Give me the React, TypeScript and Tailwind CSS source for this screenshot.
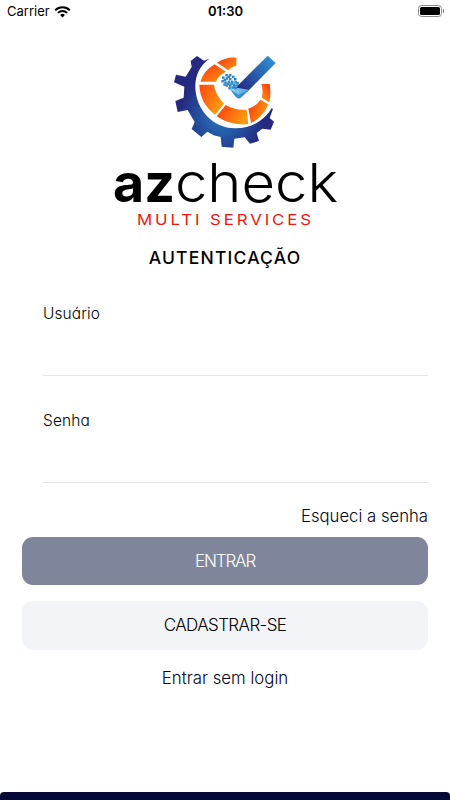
import { ReactNode } from 'react';

const pixels = [
  [181, 87], [192, 87], [201, 92], [171, 94], [182, 97], [192, 99], [207, 99], [169, 105], [178, 109],
  [188, 107], [198, 107], [208, 108], [182, 118], [192, 118], [203, 115], [211, 118], [190, 126], [199, 124],
  [208, 126], [187, 92], [176, 101], [196, 112], [204, 121], [214, 111], [175, 115], [186, 113],
];

const GearLogo = () => {
  return (
    <svg viewBox="0 0 360 330" className="h-[110px] w-[120px]">
      <defs>
        <radialGradient id="gear" gradientUnits="userSpaceOnUse" cx="170" cy="215" r="150">
          <stop offset="0.1" stopColor="#2472b8" />
          <stop offset="0.85" stopColor="#252a80" />
        </radialGradient>
        <linearGradient id="ringTop" x1="0" y1="0" x2="1" y2="1">
          <stop offset="0.1" stopColor="#fa3c10" />
          <stop offset="1" stopColor="#ff9a10" />
        </linearGradient>
        <linearGradient id="ringLeft" x1="0" y1="0" x2="1" y2="0.6">
          <stop offset="0" stopColor="#fa4510" />
          <stop offset="1" stopColor="#ff9d10" />
        </linearGradient>
        <linearGradient id="ringBottom" x1="0" y1="0" x2="1" y2="0.4">
          <stop offset="0" stopColor="#f93510" />
          <stop offset="1" stopColor="#ff9a10" />
        </linearGradient>
        <linearGradient id="ringRight" x1="1" y1="0" x2="0.3" y2="1">
          <stop offset="0" stopColor="#f93510" />
          <stop offset="1" stopColor="#ff9210" />
        </linearGradient>
        <linearGradient id="arm" gradientUnits="userSpaceOnUse" x1="322" y1="40" x2="232" y2="130">
          <stop offset="0" stopColor="#2e90d4" />
          <stop offset="1" stopColor="#252f8a" />
        </linearGradient>
        <linearGradient id="tip" x1="0" y1="0" x2="1" y2="0.4">
          <stop offset="0" stopColor="#a5dbf6" />
          <stop offset="1" stopColor="#4a9fd8" />
        </linearGradient>
      </defs>
      <path
        fill="url(#gear)"
        d="M77 48L96 33L117 47L133 41C103 63 90 93 91 128C94 195 143 248 210 250C256 251 298 228 320 189L324 192L314 219L327 230L317 254L292 251L275 264L282 288L255 296L239 277L208 281L205 308L170 305L167 276L146 271L127 260L109 276L80 252L89 231L68 195L38 201L31 168L56 158L58 125L27 112L33 89L62 95L80 66Z"
      />
      <path fill="url(#ringTop)" d="M156 53Q184 36 214 38V62Q201 64 190 76Z" />
      <path fill="url(#ringTop)" d="M149 58L183 80Q160 90 153 110H106Q116 77 149 58Z" />
      <path fill="url(#ringLeft)" d="M103 119H147Q149 145 177 176L151 209Q105 176 103 119Z" />
      <path fill="url(#ringBottom)" d="M182 180Q210 197 245 194L250 237Q199 244 155 214Z" />
      <path fill="url(#ringBottom)" d="M250 191Q276 183 286 164L310 178Q293 219 258 234Z" />
      <path fill="url(#ringRight)" d="M289 117H314Q319 149 313 172L290 158Q296 138 289 117Z" />
      <path fill="url(#arm)" d="M308 32L332 54L247 140L214 134V126Z" />
      <path fill="url(#tip)" d="M195 133L214 128L252 134L229 157Q221 164 213 156Z" />
      <path fill="#2f8fd6" d="M195 133L221 150L252 134L229 157Q221 164 213 156Z" />
      <g fill="#2b86c6">
        {pixels.map(([x, y]) => (
          <rect key={`${x}-${y}`} x={x} y={y} width="7.5" height="7.5" />
        ))}
      </g>
    </svg>
  );
};

const Wordmark = () => {
  return (
    <svg viewBox="0 0 230 75" className="h-[75px] w-[230px] overflow-visible font-['Inter',sans-serif]">
      <text y="47" fontSize="54">
        <tspan x="3" fontWeight="700" textLength="62" lengthAdjust="spacingAndGlyphs">az</tspan>
        <tspan x="65" fontWeight="300" textLength="163" lengthAdjust="spacingAndGlyphs">check</tspan>
      </text>
      <text x="27" y="70" fontSize="14.5" fill="#f5150f" letterSpacing="2.5" textLength="177" lengthAdjust="spacingAndGlyphs">
        MULTI SERVICES
      </text>
    </svg>
  );
};

const WifiIcon = () => {
  return (
    <svg viewBox="0 0 17 12" className="h-3 w-[17px]">
      <path d="M8.5 11.5L6.100 9A3.500 3.500 0 0 1 10.900 9Z" />
      <path d="M3.900 6.900A6.600 6.600 0 0 1 13.100 6.900" fill="none" stroke="#000" strokeWidth="1.900" />
      <path d="M1.200 4.200A10.400 10.400 0 0 1 15.800 4.200" fill="none" stroke="#000" strokeWidth="1.900" />
    </svg>
  );
};

const Battery = () => {
  return (
    <div className="mb-0.5 flex items-center gap-px justify-self-end">
      <div className="h-3 w-6 rounded-[3.5px] border border-[#8b8b8b] p-px">
        <div className="h-full rounded-[1.5px] bg-black" />
      </div>
      <div className="h-1 w-px rounded-r bg-[#777]" />
    </div>
  );
};

const Field = ({ label, type }: { label: string; type: string }) => {
  return (
    <label className="block pl-[21px]">
      <span className="block pt-px text-[15.5px] font-[350] leading-[23px] tracking-[0.1px] [font-feature-settings:'cv11']">
        {label}
      </span>
      <input type={type} className="block h-[51px] w-full border-b border-[#e4e4e6] outline-none" />
    </label>
  );
};

const Button = ({ className, children }: { className: string; children: ReactNode }) => {
  return (
    <button className={`flex w-full items-center justify-center rounded-[11px] pt-px text-[17px] font-[350] ${className}`}>
      {children}
    </button>
  );
};

const App = () => {
  return (
    <div className="flex h-[800px] w-[450px] flex-col overflow-hidden bg-white font-['Inter',sans-serif] text-black">
      <header className="grid h-[23px] grid-cols-3 items-center pl-[7px] pr-1.5 text-[13px]">
        <div className="flex items-center gap-1">
          Carrier
          <WifiIcon />
        </div>
        <span className="text-center font-semibold">01:30</span>
        <Battery />
      </header>

      <main className="flex flex-1 flex-col px-[22px] pt-[22px]">
        <div className="flex flex-col items-center">
          <GearLogo />
          <Wordmark />
          <h1 className="text-[17.5px] font-medium leading-[56px] tracking-[1.2px]">AUTENTICAÇÃO</h1>
        </div>

        <div className="mt-[15px] flex flex-col gap-8">
          <Field label="Usuário" type="text" />
          <Field label="Senha" type="password" />
        </div>

        <a href="#" className="mt-[21px] self-end text-[16.7px] font-[350] leading-6 text-[#020624]">Esqueci a senha</a>
        <Button className="mt-[9px] h-12 bg-[#7f859b] tracking-[-1.1px] text-white">ENTRAR</Button>
        <Button className="mt-4 h-[49px] bg-[#f3f4f8] tracking-[-0.6px]">CADASTRAR-SE</Button>
        <a href="#" className="mt-4 self-center text-[16.8px] font-[350] leading-6 text-[#020624]">Entrar sem login</a>
      </main>

      <footer className="h-[8.5px] rounded-t-[4px] bg-[#020a35]" />
    </div>
  );
};

export default App;
